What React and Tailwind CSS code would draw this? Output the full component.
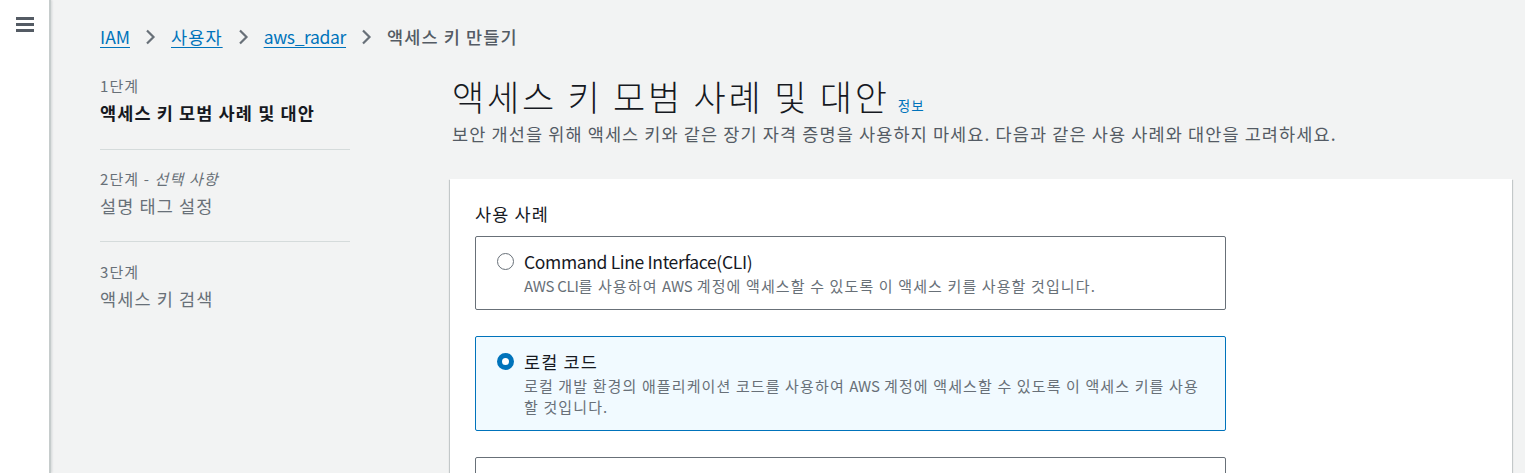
import React, { useState } from 'react';

const font = { fontFamily: '"Noto Sans CJK KR", "Noto Sans", sans-serif' };

// Latin runs get tighter tracking, Hangul keeps the wider spacing
function T({ children }) {
    const parts = children.split(/([A-Za-z][A-Za-z0-9_()]*(?: [A-Za-z][A-Za-z0-9_()]*)*)/);
    return parts.map((p, i) =>
        i % 2 ? (
            <span key={i} className="tracking-[-0.02em]">
                {p}
            </span>
        ) : (
            p
        )
    );
}

function Chevron() {
    return (
        <svg width="11" height="16" viewBox="0 0 11 16" className="mx-[15px] shrink-0">
            <path d="M2 1.5 L8.5 8 L2 14.5" fill="none" stroke="#687078" strokeWidth="2.2" />
        </svg>
    );
}

function Radio({ checked }) {
    return checked ? (
        <span className="block w-[17px] h-[17px] rounded-full border-[5px] border-[#0073bb] bg-white" />
    ) : (
        <span className="block w-[17px] h-[17px] rounded-full border-[1.5px] border-[#687078] bg-white" />
    );
}

const options = [
    {
        id: 'cli',
        title: 'Command Line Interface(CLI)',
        desc: 'AWS CLI를 사용하여 AWS 계정에 액세스할 수 있도록 이 액세스 키를 사용할 것입니다.',
    },
    {
        id: 'local',
        title: '로컬 코드',
        desc: '로컬 개발 환경의 애플리케이션 코드를 사용하여 AWS 계정에 액세스할 수 있도록 이 액세스 키를 사용할 것입니다.',
    },
    {
        id: 'compute',
        title: 'AWS 컴퓨팅 서비스에서 실행되는 애플리케이션',
        desc: 'Amazon EC2, Amazon ECS 또는 AWS Lambda와 같은 AWS 컴퓨팅 서비스에서 실행되는 애플리케이션 코드를 사용하여 AWS 계정에 액세스할 수 있도록 이 액세스 키를 사용할 것입니다.',
    },
];

export default function App() {
    const [selected, setSelected] = useState('local');

    return (
        <div className="flex h-[473px] overflow-hidden bg-[#f2f3f3] text-[#16191f] tracking-[0.07em]" style={font}>
            {/* nav toggle strip */}
            <aside className="w-[51px] shrink-0 bg-white border-r-2 border-[#c6cccc] shadow-[1px_0_2px_rgba(0,28,36,0.12)]">
                <div className="flex flex-col gap-[3.5px] ml-[16px] mt-[17px] w-[18px]">
                    <span className="h-[2.5px] bg-[#545b64]" />
                    <span className="h-[2.5px] bg-[#545b64]" />
                    <span className="h-[2.5px] bg-[#545b64]" />
                </div>
            </aside>

            <div className="flex-1 pl-[49px] pr-[13px]">
                {/* breadcrumb */}
                <nav className="flex items-center h-[26px] mt-[24px] text-[17.5px]">
                    <a className="text-[#0073bb] underline underline-offset-[3px] tracking-normal">IAM</a>
                    <Chevron />
                    <a className="text-[#0073bb] underline underline-offset-[3px]">사용자</a>
                    <Chevron />
                    <a className="text-[#0073bb] underline underline-offset-[3px] tracking-[-0.02em]">aws_radar</a>
                    <Chevron />
                    <span className="text-[#545b64] font-medium">액세스 키 만들기</span>
                </nav>

                <div className="flex mt-[24px]">
                    {/* steps */}
                    <ol className="w-[250px] shrink-0 mr-[100px] pt-[1px]">
                        <li className="pb-[23px] border-b border-[#d5dbdb]">
                            <div className="text-[15px] leading-[22px] text-[#687078]">1단계</div>
                            <div className="text-[17.5px] leading-[26px] mt-[3px] font-bold">액세스 키 모범 사례 및 대안</div>
                        </li>
                        <li className="pt-[18px] pb-[22px] border-b border-[#d5dbdb]">
                            <div className="text-[15px] leading-[22px] text-[#687078]">
                                2단계 - <i>선택 사항</i>
                            </div>
                            <div className="text-[17.5px] leading-[26px] mt-[3px] text-[#687078]">설명 태그 설정</div>
                        </li>
                        <li className="pt-[19px]">
                            <div className="text-[15px] leading-[22px] text-[#687078]">3단계</div>
                            <div className="text-[17.5px] leading-[26px] mt-[3px] text-[#687078]">액세스 키 검색</div>
                        </li>
                    </ol>

                    {/* main */}
                    <main className="flex-1">
                        <div className="pl-[2px]">
                            <h1 className="flex items-baseline">
                                <span className="text-[35px] leading-[44px] font-light tracking-[0.08em]">액세스 키 모범 사례 및 대안</span>
                                <a className="ml-[8px] text-[13.5px] text-[#0073bb]">정보</a>
                            </h1>
                            <p className="text-[17.5px] leading-[26px] text-[#545b64] mt-[3px]">
                                보안 개선을 위해 액세스 키와 같은 장기 자격 증명을 사용하지 마세요. 다음과 같은 사용 사례와 대안을 고려하세요.
                            </p>
                        </div>

                        <section className="mt-[32px] bg-white px-[25px] pt-[22px] pb-6 shadow-[0_1px_1px_0_rgba(0,28,36,0.3),1px_1px_1px_0_rgba(0,28,36,0.15),-1px_1px_1px_0_rgba(0,28,36,0.15)]">
                            <div className="text-[17.5px] leading-[26px]">사용 사례</div>
                            <div className="flex flex-col gap-[26px] mt-[9px] w-[751px]">
                                {options.map((o) => {
                                    const on = selected === o.id;
                                    return (
                                        <label
                                            key={o.id}
                                            onClick={() => setSelected(o.id)}
                                            className={`flex gap-[10px] rounded-[2px] border pl-[21px] pr-[24px] pt-[12px] pb-[13px] cursor-pointer ${
                                                on ? 'border-[#0073bb] bg-[#f1faff]' : 'border-[#687078] bg-white'
                                            }`}
                                        >
                                            <div className="pt-[4px] shrink-0">
                                                <Radio checked={on} />
                                            </div>
                                            <div>
                                                <div className="text-[17.5px] leading-[26px]">
                                                    <T>{o.title}</T>
                                                </div>
                                                <div className="text-[15px] leading-[21px] text-[#687078]">
                                                    <T>{o.desc}</T>
                                                </div>
                                            </div>
                                        </label>
                                    );
                                })}
                            </div>
                        </section>
                    </main>
                </div>
            </div>
        </div>
    );
}
